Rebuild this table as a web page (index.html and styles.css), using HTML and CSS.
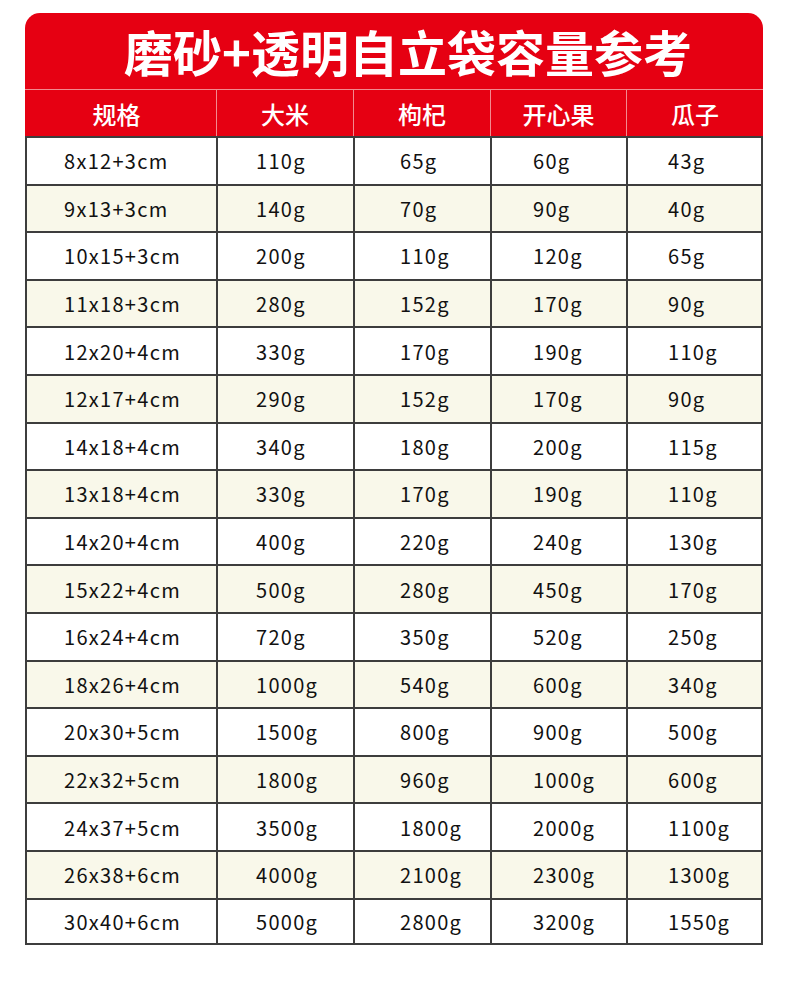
FILE: index.html
```html
<!DOCTYPE html>
<html lang="zh-CN">
<head>
<meta charset="utf-8">
<title>磨砂+透明自立袋容量参考</title>
<link rel="stylesheet" href="styles.css">
</head>
<body>
<div class="sheet">
  <div class="title">磨砂+透明自立袋容量参考</div>
  <div class="grid">
    <div class="hd">规格</div><div class="hd">大米</div><div class="hd">枸杞</div><div class="hd">开心果</div><div class="hd">瓜子</div>

    <div class="c c1">8x12+3cm</div><div class="c c2">110g</div><div class="c c3">65g</div><div class="c c4">60g</div><div class="c c5">43g</div>
    <div class="c c1 alt">9x13+3cm</div><div class="c c2 alt">140g</div><div class="c c3 alt">70g</div><div class="c c4 alt">90g</div><div class="c c5 alt">40g</div>
    <div class="c c1">10x15+3cm</div><div class="c c2">200g</div><div class="c c3">110g</div><div class="c c4">120g</div><div class="c c5">65g</div>
    <div class="c c1 alt">11x18+3cm</div><div class="c c2 alt">280g</div><div class="c c3 alt">152g</div><div class="c c4 alt">170g</div><div class="c c5 alt">90g</div>
    <div class="c c1">12x20+4cm</div><div class="c c2">330g</div><div class="c c3">170g</div><div class="c c4">190g</div><div class="c c5">110g</div>
    <div class="c c1 alt">12x17+4cm</div><div class="c c2 alt">290g</div><div class="c c3 alt">152g</div><div class="c c4 alt">170g</div><div class="c c5 alt">90g</div>
    <div class="c c1">14x18+4cm</div><div class="c c2">340g</div><div class="c c3">180g</div><div class="c c4">200g</div><div class="c c5">115g</div>
    <div class="c c1 alt">13x18+4cm</div><div class="c c2 alt">330g</div><div class="c c3 alt">170g</div><div class="c c4 alt">190g</div><div class="c c5 alt">110g</div>
    <div class="c c1">14x20+4cm</div><div class="c c2">400g</div><div class="c c3">220g</div><div class="c c4">240g</div><div class="c c5">130g</div>
    <div class="c c1 alt">15x22+4cm</div><div class="c c2 alt">500g</div><div class="c c3 alt">280g</div><div class="c c4 alt">450g</div><div class="c c5 alt">170g</div>
    <div class="c c1">16x24+4cm</div><div class="c c2">720g</div><div class="c c3">350g</div><div class="c c4">520g</div><div class="c c5">250g</div>
    <div class="c c1 alt">18x26+4cm</div><div class="c c2 alt">1000g</div><div class="c c3 alt">540g</div><div class="c c4 alt">600g</div><div class="c c5 alt">340g</div>
    <div class="c c1">20x30+5cm</div><div class="c c2">1500g</div><div class="c c3">800g</div><div class="c c4">900g</div><div class="c c5">500g</div>
    <div class="c c1 alt">22x32+5cm</div><div class="c c2 alt">1800g</div><div class="c c3 alt">960g</div><div class="c c4 alt">1000g</div><div class="c c5 alt">600g</div>
    <div class="c c1">24x37+5cm</div><div class="c c2">3500g</div><div class="c c3">1800g</div><div class="c c4">2000g</div><div class="c c5">1100g</div>
    <div class="c c1 alt">26x38+6cm</div><div class="c c2 alt">4000g</div><div class="c c3 alt">2100g</div><div class="c c4 alt">2300g</div><div class="c c5 alt">1300g</div>
    <div class="c c1">30x40+6cm</div><div class="c c2">5000g</div><div class="c c3">2800g</div><div class="c c4">3200g</div><div class="c c5">1550g</div>
  </div>
</div>
</body>
</html>
```
FILE: styles.css
```css
html, body {
  margin: 0;
  padding: 0;
  background: #ffffff;
}
body {
  font-family: "Noto Sans CJK SC", "Noto Sans", sans-serif;
}
.sheet {
  width: 738px;
  margin: 13px 0 0 25px;
}
.title {
  height: 76px;
  background: #e60012;
  border-radius: 15px 15px 0 0;
  color: #ffffff;
  font-size: 49px;
  font-weight: 700;
  line-height: 76px;
  text-align: center;
  padding-left: 28px;
  padding-bottom: 2px;
  box-sizing: border-box;
}
.grid {
  display: grid;
  grid-template-columns: 191px 137px 137px 136px 137px;
  grid-template-rows: 47px;
  grid-auto-rows: 47.6px;
}
.hd {
  background: #e60012;
  color: #ffffff;
  font-size: 24px;
  font-weight: 500;
  display: flex;
  align-items: center;
  justify-content: center;
  border-top: 1px solid #f28a8f;
  border-left: 1px solid #f28a8f;
  box-sizing: border-box;
}
.hd:first-child {
  border-left: none;
  padding-right: 8px;
}
.c {
  display: flex;
  align-items: center;
  font-size: 20px;
  color: #111111;
  letter-spacing: 1.3px;
  border-left: 2px solid #3d3d3d;
  border-top: 2px solid #3d3d3d;
  box-sizing: border-box;
  background: #ffffff;
}
.c5 {
  border-right: 2px solid #3d3d3d;
}
.alt {
  background: #f9f8ea;
}
.c1 { padding-left: 37px; }
.c2 { padding-left: 38px; }
.c3 { padding-left: 45px; }
.c4 { padding-left: 41px; }
.c5 { padding-left: 40px; }
.grid > .c:nth-last-child(-n+5) {
  border-bottom: 2px solid #3d3d3d;
}
```
